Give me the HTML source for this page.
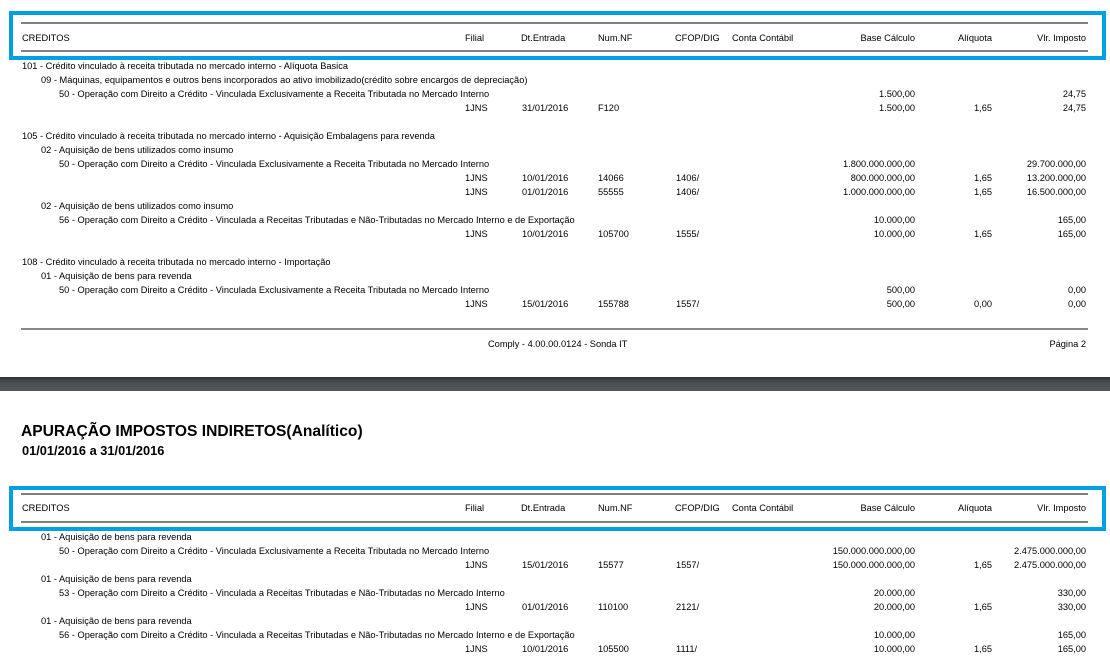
<!DOCTYPE html>
<html><head><meta charset="utf-8"><style>
body{margin:0;width:1110px;height:661px;background:#fff;position:relative;overflow:hidden;font-family:"Liberation Sans",sans-serif;color:#000}
div{position:absolute}
.t{font-size:9.25px;line-height:14px;height:14px;white-space:nowrap;margin-top:1px}
.r{text-align:right}
.box{border:4px solid #00a1e4;box-sizing:border-box}
.gl{height:2px;background:#808080;left:21px;width:1067px}
</style></head><body>
<div class="box" style="left:9px;top:11px;width:1097px;height:49px"></div>
<div class="gl" style="top:22px"></div><div class="gl" style="top:50px"></div>
<div class="box" style="left:9px;top:486px;width:1097px;height:45px"></div>
<div class="gl" style="top:493px"></div><div class="gl" style="top:521px"></div>
<div style="left:0;top:377px;width:1110px;height:14px;background:linear-gradient(#2e3133,#4a4e51 40%,#55595c)"></div>
<div style="left:21px;top:423px;font-size:15.6px;font-weight:bold;white-space:nowrap">APURAÇÃO IMPOSTOS INDIRETOS(Analítico)</div>
<div style="left:22px;top:443px;font-size:12.8px;font-weight:bold;white-space:nowrap">01/01/2016 a 31/01/2016</div>
<div style="left:21px;top:328px;width:1067px;height:2px;background:#888"></div>

<div class="t" style="left:22px;top:30px">CREDITOS</div>
<div class="t" style="left:465px;top:30px">Filial</div>
<div class="t" style="left:521px;top:30px">Dt.Entrada</div>
<div class="t" style="left:598px;top:30px">Num.NF</div>
<div class="t" style="left:675px;top:30px">CFOP/DIG</div>
<div class="t" style="left:732px;top:30px">Conta Contábil</div>
<div class="t r" style="right:195px;top:30px">Base Cálculo</div>
<div class="t r" style="right:118px;top:30px">Alíquota</div>
<div class="t r" style="right:24px;top:30px">Vlr. Imposto</div>

<div class="t" style="left:22px;top:500px">CREDITOS</div>
<div class="t" style="left:465px;top:500px">Filial</div>
<div class="t" style="left:521px;top:500px">Dt.Entrada</div>
<div class="t" style="left:598px;top:500px">Num.NF</div>
<div class="t" style="left:675px;top:500px">CFOP/DIG</div>
<div class="t" style="left:732px;top:500px">Conta Contábil</div>
<div class="t r" style="right:195px;top:500px">Base Cálculo</div>
<div class="t r" style="right:118px;top:500px">Alíquota</div>
<div class="t r" style="right:24px;top:500px">Vlr. Imposto</div>

<div class="t" style="left:22px;top:58px">101 - Crédito vinculado à receita tributada no mercado interno - Alíquota Basica</div>
<div class="t" style="left:41px;top:72px">09 - Máquinas, equipamentos e outros bens incorporados ao ativo imobilizado(crédito sobre encargos de depreciação)</div>
<div class="t" style="left:59px;top:86px">50 - Operação com Direito a Crédito - Vinculada Exclusivamente a Receita Tributada no Mercado Interno</div>
<div class="t r" style="right:195px;top:86px">1.500,00</div><div class="t r" style="right:24px;top:86px">24,75</div>
<div class="t" style="left:465px;top:100px">1JNS</div><div class="t" style="left:522px;top:100px">31/01/2016</div><div class="t" style="left:598px;top:100px">F120</div>
<div class="t r" style="right:195px;top:100px">1.500,00</div><div class="t r" style="right:118px;top:100px">1,65</div><div class="t r" style="right:24px;top:100px">24,75</div>

<div class="t" style="left:22px;top:128px">105 - Crédito vinculado à receita tributada no mercado interno - Aquisição Embalagens para revenda</div>
<div class="t" style="left:41px;top:142px">02 - Aquisição de bens utilizados como insumo</div>
<div class="t" style="left:59px;top:156px">50 - Operação com Direito a Crédito - Vinculada Exclusivamente a Receita Tributada no Mercado Interno</div>
<div class="t r" style="right:195px;top:156px">1.800.000.000,00</div><div class="t r" style="right:24px;top:156px">29.700.000,00</div>
<div class="t" style="left:465px;top:170px">1JNS</div><div class="t" style="left:522px;top:170px">10/01/2016</div><div class="t" style="left:598px;top:170px">14066</div><div class="t" style="left:676px;top:170px">1406/</div>
<div class="t r" style="right:195px;top:170px">800.000.000,00</div><div class="t r" style="right:118px;top:170px">1,65</div><div class="t r" style="right:24px;top:170px">13.200.000,00</div>
<div class="t" style="left:465px;top:184px">1JNS</div><div class="t" style="left:522px;top:184px">01/01/2016</div><div class="t" style="left:598px;top:184px">55555</div><div class="t" style="left:676px;top:184px">1406/</div>
<div class="t r" style="right:195px;top:184px">1.000.000.000,00</div><div class="t r" style="right:118px;top:184px">1,65</div><div class="t r" style="right:24px;top:184px">16.500.000,00</div>
<div class="t" style="left:41px;top:198px">02 - Aquisição de bens utilizados como insumo</div>
<div class="t" style="left:59px;top:212px">56 - Operação com Direito a Crédito - Vinculada a Receitas Tributadas e Não-Tributadas no Mercado Interno e de Exportação</div>
<div class="t r" style="right:195px;top:212px">10.000,00</div><div class="t r" style="right:24px;top:212px">165,00</div>
<div class="t" style="left:465px;top:226px">1JNS</div><div class="t" style="left:522px;top:226px">10/01/2016</div><div class="t" style="left:598px;top:226px">105700</div><div class="t" style="left:676px;top:226px">1555/</div>
<div class="t r" style="right:195px;top:226px">10.000,00</div><div class="t r" style="right:118px;top:226px">1,65</div><div class="t r" style="right:24px;top:226px">165,00</div>

<div class="t" style="left:22px;top:254px">108 - Crédito vinculado à receita tributada no mercado interno - Importação</div>
<div class="t" style="left:41px;top:268px">01 - Aquisição de bens para revenda</div>
<div class="t" style="left:59px;top:282px">50 - Operação com Direito a Crédito - Vinculada Exclusivamente a Receita Tributada no Mercado Interno</div>
<div class="t r" style="right:195px;top:282px">500,00</div><div class="t r" style="right:24px;top:282px">0,00</div>
<div class="t" style="left:465px;top:296px">1JNS</div><div class="t" style="left:522px;top:296px">15/01/2016</div><div class="t" style="left:598px;top:296px">155788</div><div class="t" style="left:676px;top:296px">1557/</div>
<div class="t r" style="right:195px;top:296px">500,00</div><div class="t r" style="right:118px;top:296px">0,00</div><div class="t r" style="right:24px;top:296px">0,00</div>

<div class="t" style="left:488px;top:336px">Comply - 4.00.00.0124 - Sonda IT</div>
<div class="t r" style="right:24px;top:336px">Página 2</div>

<div class="t" style="left:41px;top:529px">01 - Aquisição de bens para revenda</div>
<div class="t" style="left:59px;top:543px">50 - Operação com Direito a Crédito - Vinculada Exclusivamente a Receita Tributada no Mercado Interno</div>
<div class="t r" style="right:195px;top:543px">150.000.000.000,00</div><div class="t r" style="right:24px;top:543px">2.475.000.000,00</div>
<div class="t" style="left:465px;top:557px">1JNS</div><div class="t" style="left:522px;top:557px">15/01/2016</div><div class="t" style="left:598px;top:557px">15577</div><div class="t" style="left:676px;top:557px">1557/</div>
<div class="t r" style="right:195px;top:557px">150.000.000.000,00</div><div class="t r" style="right:118px;top:557px">1,65</div><div class="t r" style="right:24px;top:557px">2.475.000.000,00</div>
<div class="t" style="left:41px;top:571px">01 - Aquisição de bens para revenda</div>
<div class="t" style="left:59px;top:585px">53 - Operação com Direito a Crédito - Vinculada a Receitas Tributadas e Não-Tributadas no Mercado Interno</div>
<div class="t r" style="right:195px;top:585px">20.000,00</div><div class="t r" style="right:24px;top:585px">330,00</div>
<div class="t" style="left:465px;top:599px">1JNS</div><div class="t" style="left:522px;top:599px">01/01/2016</div><div class="t" style="left:598px;top:599px">110100</div><div class="t" style="left:676px;top:599px">2121/</div>
<div class="t r" style="right:195px;top:599px">20.000,00</div><div class="t r" style="right:118px;top:599px">1,65</div><div class="t r" style="right:24px;top:599px">330,00</div>
<div class="t" style="left:41px;top:613px">01 - Aquisição de bens para revenda</div>
<div class="t" style="left:59px;top:627px">56 - Operação com Direito a Crédito - Vinculada a Receitas Tributadas e Não-Tributadas no Mercado Interno e de Exportação</div>
<div class="t r" style="right:195px;top:627px">10.000,00</div><div class="t r" style="right:24px;top:627px">165,00</div>
<div class="t" style="left:465px;top:641px">1JNS</div><div class="t" style="left:522px;top:641px">10/01/2016</div><div class="t" style="left:598px;top:641px">105500</div><div class="t" style="left:676px;top:641px">1111/</div>
<div class="t r" style="right:195px;top:641px">10.000,00</div><div class="t r" style="right:118px;top:641px">1,65</div><div class="t r" style="right:24px;top:641px">165,00</div>
</body></html>
